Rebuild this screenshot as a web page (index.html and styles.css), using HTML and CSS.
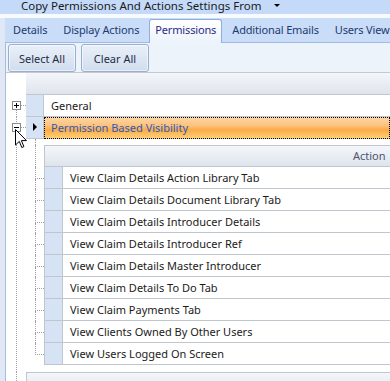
FILE: index.html
```html
<!DOCTYPE html>
<html lang="en">
<head>
    <meta charset="UTF-8">
    <meta name="viewport" content="width=device-width, initial-scale=1.0">
    <title>Permissions</title>
    <link rel="stylesheet" href="styles.css">
</head>
<body>
    <div class="topbar">Copy Permissions And Actions Settings From<span class="caret"></span></div>
    <div class="gap"></div>

    <div class="panel">
        <div class="tabs">
            <span class="tab">Details</span>
            <span class="tab">Display Actions</span>
            <span class="tab active">Permissions</span>
            <span class="tab">Additional Emails</span>
            <span class="tab">Users View</span>
        </div>

        <div class="toolbar">
            <button class="btn">Select All</button>
            <button class="btn">Clear All</button>
        </div>

        <div class="grid">
            <div class="row">
                <div class="tree"></div>
                <div class="hcell"></div>
            </div>

            <div class="row">
                <div class="tree">
                    <svg width="20" height="22" viewBox="0 0 20 22">
                        <path d="M10.5 15 V22 M15 10.5 H20" stroke="#a0a0a0" stroke-dasharray="1 1" fill="none"/>
                        <rect x="6.5" y="6.5" width="8" height="8" fill="#fff" stroke="#8a8a8a"/>
                        <path d="M8 10.5 H13 M10.5 8 V13" stroke="#000" fill="none"/>
                    </svg>
                </div>
                <div class="ind"></div>
                <div class="cell">General</div>
            </div>

            <div class="row focused">
                <div class="tree">
                    <svg width="20" height="22" viewBox="0 0 20 22">
                        <path d="M10.5 0 V6 M10.5 15 V22 M15 10.5 H20" stroke="#a0a0a0" stroke-dasharray="1 1" fill="none"/>
                        <rect x="6.5" y="6.5" width="8" height="8" fill="#fff" stroke="#8a8a8a"/>
                        <path d="M8 10.5 H13" stroke="#000" fill="none"/>
                    </svg>
                </div>
                <div class="ind">
                    <svg width="17" height="21" viewBox="0 0 17 21">
                        <polygon points="7,6 11,10 7,14" fill="#000"/>
                    </svg>
                </div>
                <div class="cell">Permission Based Visibility</div>
            </div>

            <div class="detail">
                <div class="tree line"></div>
                <div class="child">
                    <div class="crow spacer"><div class="conn"><div class="pass"></div></div></div>
                    <div class="crow chead">
                        <div class="conn"><div class="pass"></div></div>
                        <div class="chcell">Action</div>
                    </div>
                    <div class="crow">
                        <div class="conn"><div class="elbow"></div><div class="down"></div></div>
                        <div class="cind"></div>
                        <div class="ccell">View Claim Details Action Library Tab</div>
                    </div>
                    <div class="crow">
                        <div class="conn"><div class="elbow"></div><div class="down"></div></div>
                        <div class="cind"></div>
                        <div class="ccell">View Claim Details Document Library Tab</div>
                    </div>
                    <div class="crow">
                        <div class="conn"><div class="elbow"></div><div class="down"></div></div>
                        <div class="cind"></div>
                        <div class="ccell">View Claim Details Introducer Details</div>
                    </div>
                    <div class="crow">
                        <div class="conn"><div class="elbow"></div><div class="down"></div></div>
                        <div class="cind"></div>
                        <div class="ccell">View Claim Details Introducer Ref</div>
                    </div>
                    <div class="crow">
                        <div class="conn"><div class="elbow"></div><div class="down"></div></div>
                        <div class="cind"></div>
                        <div class="ccell">View Claim Details Master Introducer</div>
                    </div>
                    <div class="crow">
                        <div class="conn"><div class="elbow"></div><div class="down"></div></div>
                        <div class="cind"></div>
                        <div class="ccell">View Claim Details To Do Tab</div>
                    </div>
                    <div class="crow">
                        <div class="conn"><div class="elbow"></div><div class="down"></div></div>
                        <div class="cind"></div>
                        <div class="ccell">View Claim Payments Tab</div>
                    </div>
                    <div class="crow">
                        <div class="conn"><div class="elbow"></div><div class="down"></div></div>
                        <div class="cind"></div>
                        <div class="ccell">View Clients Owned By Other Users</div>
                    </div>
                    <div class="crow">
                        <div class="conn"><div class="elbow"></div></div>
                        <div class="cind"></div>
                        <div class="ccell">View Users Logged On Screen</div>
                    </div>
                </div>
            </div>

            <div class="row foot">
                <div class="tree line"></div>
                <div class="footbar"></div>
            </div>
        </div>
    </div>

    <svg class="cursor" width="12" height="20" viewBox="0 0 12 20">
        <path d="M0.5 0.5 V16 L4.3 12.4 L6.8 18.5 L8.9 17.6 L6.4 11.6 H11.5 Z" fill="#fff" stroke="#000" stroke-linejoin="miter"/>
    </svg>
</body>
</html>
```

FILE: styles.css
```css
body {
    margin: 0;
    width: 390px;
    height: 381px;
    overflow: hidden;
    position: relative;
    font-family: "Noto Sans", "Open Sans", sans-serif;
    font-size: 11px;
    color: #1b1b1b;
    background: #dfe8f4;
}

.topbar {
    height: 14px;
    line-height: 12px;
    padding-left: 21px;
    font-size: 11.5px;
    background: #c4daf8;
    white-space: nowrap;
    overflow: hidden;
}

.caret {
    display: inline-block;
    margin-left: 13px;
    vertical-align: 3px;
    border-left: 3px solid transparent;
    border-right: 3px solid transparent;
    border-top: 3px solid #000;
}

.gap {
    height: 4px;
    background: #f7fafe;
}

.panel {
    margin-left: 5px;
    height: 363px;
    border-left: 1px solid #a3bcdf;
    background: #edf3fb;
}

.tabs {
    height: 24px;
    display: flex;
    align-items: flex-end;
    padding-left: 0;
    margin-left: -1px;
    background: #c9ddf8;
    border-bottom: 1px solid #9dbbe3;
    white-space: nowrap;
    letter-spacing: -0.15px;
}

.tab {
    margin: 0 2px;
    padding: 0 6px;
    height: 22px;
    line-height: 20px;
    color: #1e3a6e;
}

.tab.active {
    height: 23px;
    margin-bottom: -1px;
    padding: 0 5px;
    border: 1px solid #8eb0de;
    border-bottom: none;
    border-radius: 3px 3px 0 0;
    background: linear-gradient(#ffffff, #edf3fb);
    color: #2b2a86;
}

.toolbar {
    height: 29px;
    display: flex;
    align-items: flex-start;
    gap: 5px;
    padding: 1px 2px 0;
    box-sizing: border-box;
}

.btn {
    width: 68px;
    height: 28px;
    font: inherit;
    color: #1f2d45;
    border: 1px solid #98afcf;
    border-radius: 3px;
    background: linear-gradient(#e9f0f9, #d1ddee);
    box-shadow: inset 0 0 0 1px rgba(255, 255, 255, 0.55);
    padding: 0;
}

.grid {
    border-top: 1px solid #c5c9cf;
    background: #fff;
}

.row {
    height: 22px;
    display: flex;
}

.tree {
    width: 20px;
    flex: none;
    background: #fff;
}

.tree svg {
    display: block;
}

.tree.line {
    background: linear-gradient(#a0a0a0 50%, transparent 50%) 10px 0 / 1px 2px repeat-y;
}

.hcell,
.chcell,
.footbar {
    flex: 1;
    box-sizing: border-box;
    background: linear-gradient(#f4f6fa, #dfe4ec);
    border-bottom: 1px solid #c0c6ce;
}

.ind {
    width: 18px;
    flex: none;
    box-sizing: border-box;
    background: #d5e3f4;
    border-right: 1px solid #c0c6ce;
    border-bottom: 1px solid #c0c6ce;
}

.ind svg {
    display: block;
}

.cell {
    flex: 1;
    padding-left: 7px;
    line-height: 21px;
    border-bottom: 1px solid #c0c6ce;
    white-space: nowrap;
}

.focused .cell {
    color: #2c5bbf;
    border-bottom: none;
    outline: 1px dotted #000;
    outline-offset: -1px;
    background: linear-gradient(#fcd7a6, #fcc17c 40%, #fbaa45 58%, #fdd47e);
}

.detail {
    display: flex;
    height: 233px;
}

.child {
    flex: 1;
}

.crow {
    height: 22px;
    display: flex;
}

.crow.spacer {
    height: 6px;
}

.conn {
    width: 18px;
    flex: none;
    display: flex;
    flex-direction: column;
}

.conn .pass {
    flex: 1;
    margin-left: 9px;
    border-left: 1px dotted #a0a0a0;
}

.conn .elbow {
    height: 11px;
    margin-left: 9px;
    border-left: 1px dotted #a0a0a0;
    border-bottom: 1px dotted #a0a0a0;
}

.conn .down {
    flex: 1;
    margin-left: 9px;
    border-left: 1px dotted #a0a0a0;
}

.chcell {
    border-top: 1px solid #c0c6ce;
    border-left: 1px solid #c0c6ce;
    padding-left: 308px;
    line-height: 20px;
    color: #4a5670;
    white-space: nowrap;
    overflow: hidden;
}

.cind {
    width: 19px;
    flex: none;
    box-sizing: border-box;
    background: #d5e3f4;
    border-left: 1px solid #c0c6ce;
    border-right: 1px solid #c0c6ce;
    border-bottom: 1px solid #c0c6ce;
}

.ccell {
    flex: 1;
    padding-left: 7px;
    line-height: 21px;
    border-bottom: 1px solid #c0c6ce;
    white-space: nowrap;
}

.foot .footbar {
    border-top: 1px solid #c0c6ce;
    border-left: 1px solid #c0c6ce;
    border-bottom: none;
}

.cursor {
    position: absolute;
    left: 15px;
    top: 129px;
}
```
